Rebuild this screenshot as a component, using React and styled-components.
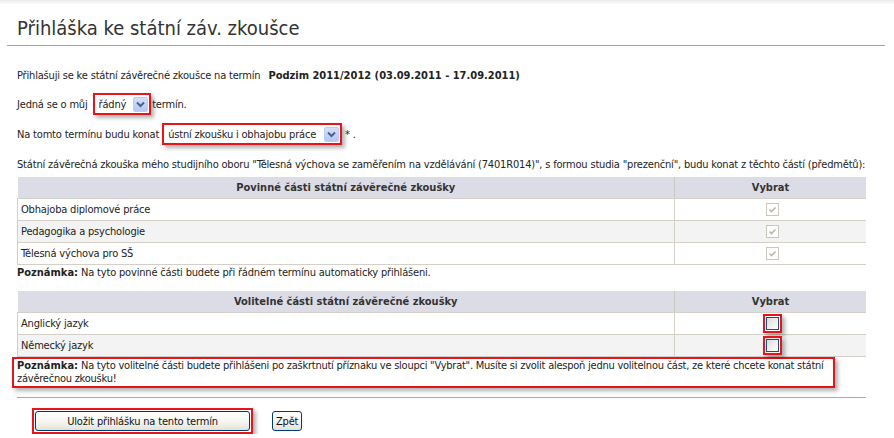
import React from 'react';
import styled, { createGlobalStyle } from 'styled-components';

const GlobalStyle = createGlobalStyle`
  html, body {
    margin: 0;
    padding: 0;
    background: #fff;
  }
  body {
    font-family: 'DejaVu Sans Condensed', 'Liberation Sans', sans-serif;
    font-size: 11px;
    letter-spacing: -0.18px;
    color: #222;
  }
`;

const TopStrip = styled.div`
  height: 4px;
  background: linear-gradient(#ececec, #fafafa);
`;

const Page = styled.div`
  padding: 0 9px 0 7px;
`;

const Header = styled.div`
  height: 41px;
  border-bottom: 1px solid #f7941d;
  padding-left: 10px;
  display: flex;
  align-items: center;
`;

const Title = styled.h1`
  margin: 0;
  font-weight: normal;
  font-size: 20px;
  letter-spacing: 0;
  color: #333;
  padding-top: 6px;
`;

const Content = styled.div`
  padding: 0 19px 0 10px;
`;

const Line = styled.div`
  display: flex;
  align-items: center;
  height: ${p => p.h || 28}px;
  white-space: nowrap;
  gap: ${p => p.gap || 4}px;
`;

const Bold = styled.b`
  font-weight: bold;
  letter-spacing: 0;
`;

const Highlight = styled.span`
  display: inline-flex;
  align-items: center;
  border: 2px solid #e8141c;
  padding: ${p => p.pad || 1}px;
  box-shadow: 3px 3px 4px rgba(0, 0, 0, 0.3);
`;

const Select = styled.span`
  display: inline-flex;
  align-items: center;
  height: 16px;
  background: #fff;
  padding-left: 3px;
  gap: ${p => p.gap || 6}px;
`;

const DropButton = styled.span`
  width: 15px;
  height: 15px;
  border-radius: 2px;
  background: linear-gradient(#d2e0fc, #b3c8f5);
  border: 1px solid #b9cdf7;
  box-sizing: border-box;
  display: flex;
  align-items: center;
  justify-content: center;
`;

const Chevron = () => (
  <svg width="9" height="7" viewBox="0 0 9 7">
    <path d="M1 1.5 L4.5 5 L8 1.5" fill="none" stroke="#4d6185" strokeWidth="2" />
  </svg>
);

const Para = styled.div`
  height: 18px;
  margin-top: 5px;
  display: flex;
  align-items: center;
  white-space: nowrap;
`;

const Table = styled.table`
  width: 100%;
  border-collapse: collapse;
  margin-top: ${p => p.mt || 0}px;
`;

const Th = styled.th`
  height: 21px;
  padding: 0;
  background: #dcdce6;
  border-right: ${p => (p.last ? 'none' : '1px solid #ccc9c0')};
  border-bottom: 1px solid #d4d0c8;
  font-weight: bold;
  letter-spacing: 0;
  color: #333;
  text-align: center;
`;

const Tr = styled.tr`
  background: ${p => (p.alt ? '#f3f3f3' : '#fff')};
`;

const Td = styled.td`
  height: 21px;
  padding: 0 0 0 3px;
  border-bottom: 1px solid #d4d0c8;
  border-left: ${p => (p.first ? '1px solid #d4d0c8' : 'none')};
  border-right: ${p => (p.first ? '1px solid #d4d0c8' : 'none')};
  text-align: ${p => (p.center ? 'center' : 'left')};
  vertical-align: middle;
`;

const CheckBox = styled.span`
  display: inline-flex;
  align-items: center;
  justify-content: center;
  width: 13px;
  height: 13px;
  box-sizing: border-box;
  border: 1px solid ${p => (p.disabled ? '#cac8bb' : '#1c5180')};
  background: ${p => (p.disabled ? '#fff' : 'linear-gradient(135deg, #dcdcd7, #fff)')};
  vertical-align: middle;
`;

const CheckMark = () => (
  <svg width="9" height="8" viewBox="0 0 9 8">
    <path d="M1.5 3.5 L3.5 5.5 L7.5 1.5" fill="none" stroke="#b8b6a8" strokeWidth="1.6" />
  </svg>
);

const Note = styled.div`
  line-height: 13px;
  padding: 1px 0;
`;

const NoteBox = styled.div`
  border: 2px solid #e8141c;
  margin: 0 31px 0 -5px;
  padding: 0 0 1px 3px;
  line-height: 13px;
  letter-spacing: -0.24px;
  box-shadow: 3px 3px 4px rgba(0, 0, 0, 0.3);
`;

const Divider = styled.div`
  height: 1px;
  background: #a8a8a8;
  margin-top: 9px;
`;

const Actions = styled.div`
  display: flex;
  align-items: center;
  gap: 19px;
  padding: 10px 0 0 15px;
`;

const Button = styled.button`
  font-family: inherit;
  font-size: 11px;
  letter-spacing: -0.18px;
  color: #111;
  height: ${p => p.h || 20}px;
  width: ${p => (p.w ? `${p.w}px` : 'auto')};
  padding: 0 3px;
  border: 1px solid #003c74;
  border-radius: 3px;
  background: linear-gradient(#fff, #f3f3ee 60%, #e3e2d8);
  cursor: pointer;
`;

const mandatory = ['Obhajoba diplomové práce', 'Pedagogika a psychologie', 'Tělesná výchova pro SŠ'];
const optional = ['Anglický jazyk', 'Německý jazyk'];

export default function App() {
  return (
    <>
      <GlobalStyle />
      <TopStrip />
      <Page>
        <Header>
          <Title>Přihláška ke státní záv. zkoušce</Title>
        </Header>
        <Content>
          <Line h={30} gap={8} style={{ marginTop: 14 }}>
            <span>Přihlašuji se ke státní závěrečné zkoušce na termín</span>
            <Bold>Podzim 2011/2012 (03.09.2011 - 17.09.2011)</Bold>
          </Line>
          <Line h={28} gap={5}>
            <span>Jedná se o můj</span>
            <Highlight>
              <Select gap={7}>
                řádný
                <DropButton><Chevron /></DropButton>
              </Select>
            </Highlight>
            <span style={{ marginLeft: -4 }}>termín.</span>
          </Line>
          <Line h={32} gap={3}>
            <span>Na tomto termínu budu konat</span>
            <Highlight>
              <Select gap={8}>
                ústní zkoušku i obhajobu práce
                <DropButton><Chevron /></DropButton>
              </Select>
            </Highlight>
            <span>* .</span>
          </Line>
          <Para>
            Státní závěrečná zkouška mého studijního oboru "Tělesná výchova se zaměřením na vzdělávání (7401R014)", s formou studia "prezenční", budu konat z těchto částí (předmětů):
          </Para>
          <Table mt={4}>
            <colgroup>
              <col style={{ width: 657 }} />
              <col />
            </colgroup>
            <thead>
              <tr>
                <Th>Povinné části státní závěrečné zkoušky</Th>
                <Th last>Vybrat</Th>
              </tr>
            </thead>
            <tbody>
              {mandatory.map((name, i) => (
                <Tr key={name} alt={i % 2 === 1}>
                  <Td first>{name}</Td>
                  <Td center>
                    <CheckBox disabled><CheckMark /></CheckBox>
                  </Td>
                </Tr>
              ))}
            </tbody>
          </Table>
          <Note>
            <Bold>Poznámka:</Bold> Na tyto povinné části budete při řádném termínu automaticky přihlášeni.
          </Note>
          <Table mt={11}>
            <colgroup>
              <col style={{ width: 657 }} />
              <col />
            </colgroup>
            <thead>
              <tr>
                <Th>Volitelné části státní závěrečné zkoušky</Th>
                <Th last>Vybrat</Th>
              </tr>
            </thead>
            <tbody>
              {optional.map((name, i) => (
                <Tr key={name} alt={i % 2 === 1}>
                  <Td first>{name}</Td>
                  <Td center>
                    <Highlight pad={0}>
                      <CheckBox />
                    </Highlight>
                  </Td>
                </Tr>
              ))}
            </tbody>
          </Table>
          <NoteBox>
            <Bold>Poznámka:</Bold> Na tyto volitelné části budete přihlášeni po zaškrtnutí příznaku ve sloupci "Vybrat". Musíte si zvolit alespoň jednu volitelnou část, ze které chcete konat státní závěrečnou zkoušku!
          </NoteBox>
          <Divider />
          <Actions>
            <Highlight pad={0}>
              <Button w={215} h={20}>Uložit přihlášku na tento termín</Button>
            </Highlight>
            <Button h={20}>Zpět</Button>
          </Actions>
        </Content>
      </Page>
    </>
  );
}
